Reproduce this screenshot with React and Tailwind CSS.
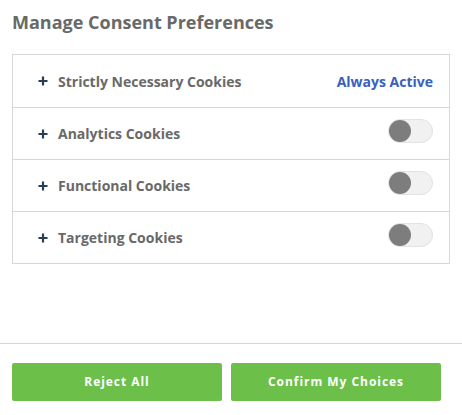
import { useState } from 'react'

const categories = [
  { id: 'necessary', name: 'Strictly Necessary Cookies', alwaysActive: true },
  { id: 'analytics', name: 'Analytics Cookies' },
  { id: 'functional', name: 'Functional Cookies' },
  { id: 'targeting', name: 'Targeting Cookies' },
]

function Toggle({ on, onChange }) {
  return (
    <button
      type="button"
      onClick={onChange}
      className={`relative w-[45px] h-[24px] rounded-full border border-[#e2e2e2] ${on ? 'bg-[#3860be]' : 'bg-[#f1f1f1]'}`}
    >
      <span
        className={`absolute top-[0px] w-[22px] h-[22px] rounded-full ${on ? 'left-[21px] bg-white' : 'left-[0px] bg-[#7d7d7d]'}`}
      />
    </button>
  )
}

export default function App() {
  const [enabled, setEnabled] = useState({})

  return (
    <div className="w-[462px] h-[415px] bg-white flex flex-col font-['Open_Sans',sans-serif]">
      <div className="px-3 pt-[9px]">
        <h2 className="text-[18px] leading-[26px] font-bold text-[#696969]">Manage Consent Preferences</h2>
      </div>

      <div className="mx-3 mt-[19px] w-[438px] border border-[#d8d8d8]">
        {categories.map((c, i) => (
          <div
            key={c.id}
            className={`h-[52px] flex items-center pl-[25px] pr-[16px] ${i > 0 ? 'border-t border-[#d8d8d8]' : ''}`}
          >
            <svg width="10" height="10" viewBox="0 0 10 10" className="mr-[10px]">
              <path d="M5 0.5v9M0.5 5h9" stroke="#263e56" strokeWidth="2.2" />
            </svg>
            <span className="text-[14px] font-bold text-[#696969]">{c.name}</span>
            <div className="ml-auto">
              {c.alwaysActive ? (
                <span className="text-[14px] font-bold text-[#3860be]">Always Active</span>
              ) : (
                <Toggle
                  on={!!enabled[c.id]}
                  onChange={() => setEnabled((s) => ({ ...s, [c.id]: !s[c.id] }))}
                />
              )}
            </div>
          </div>
        ))}
      </div>

      <div className="mt-auto border-t border-[#d8d8d8] flex gap-[9px] px-3 pt-[19px] pb-[14px]">
        <button
          type="button"
          className="w-[210px] h-[38px] rounded-[2px] bg-[#6cc04a] text-white text-[12px] font-bold tracking-[0.08em]"
        >
          Reject All
        </button>
        <button
          type="button"
          className="w-[210px] h-[38px] rounded-[2px] bg-[#6cc04a] text-white text-[12px] font-bold tracking-[0.08em]"
        >
          Confirm My Choices
        </button>
      </div>
    </div>
  )
}
